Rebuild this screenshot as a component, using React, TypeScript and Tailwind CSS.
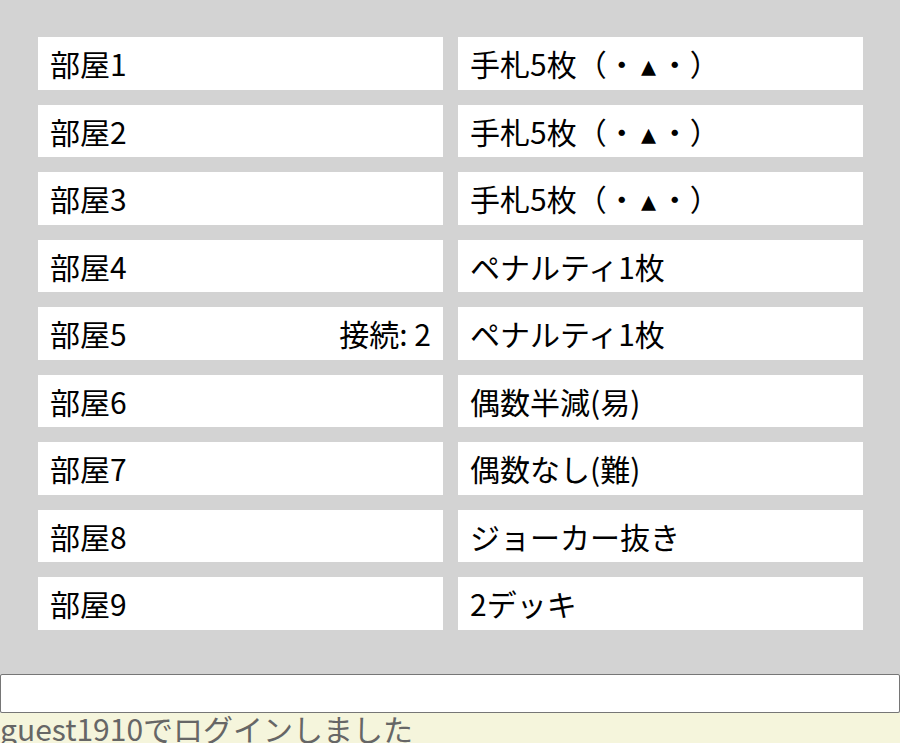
const rooms = [
  { name: "部屋1", rule: "face", count: 0 },
  { name: "部屋2", rule: "face", count: 0 },
  { name: "部屋3", rule: "face", count: 0 },
  { name: "部屋4", rule: "ペナルティ1枚", count: 0 },
  { name: "部屋5", rule: "ペナルティ1枚", count: 2 },
  { name: "部屋6", rule: "偶数半減(易)", count: 0 },
  { name: "部屋7", rule: "偶数なし(難)", count: 0 },
  { name: "部屋8", rule: "ジョーカー抜き", count: 0 },
  { name: "部屋9", rule: "2デッキ", count: 0 },
];

function FiveCards() {
  return (
    <span>
      手札5枚（・<span className="inline-block w-[23px] text-center">▴</span>・）
    </span>
  );
}

export default function App() {
  return (
    <div className="font-['Noto_Sans_CJK_JP','Noto_Sans',sans-serif] text-black">
      <div className="bg-[#d3d3d3] pt-[37px]">
        <div className="grid grid-cols-2 gap-x-[15px] gap-y-[15px] pl-[38px] pr-[37px] pb-[44.5px]">
          {rooms.map((room) => (
            <div key={room.name} className="contents">
              <div className="flex h-[52.5px] items-center justify-between bg-white px-[12px] text-[30px] leading-none">
                <span>{room.name}</span>
                {room.count > 0 && <span>接続: {room.count}</span>}
              </div>
              <div className="flex h-[52.5px] items-center bg-white px-[12px] text-[30px] leading-none">
                {room.rule === "face" ? <FiveCards /> : <span>{room.rule}</span>}
              </div>
            </div>
          ))}
        </div>
        <input
          type="text"
          className="block h-[39px] w-full rounded-[2px] border border-[#767676] bg-white px-2 text-[20px]"
        />
      </div>
      <div className="h-[30px] overflow-visible bg-[#f5f5dc] text-[30px] leading-[30px] text-[#666666]">
        guest1910でログインしました
      </div>
    </div>
  );
}
